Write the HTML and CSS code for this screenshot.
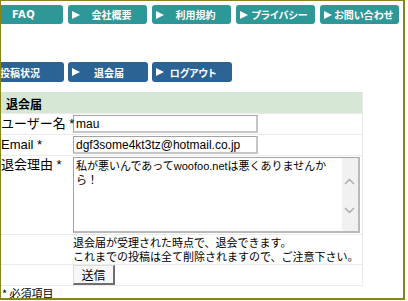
FILE: index.html
```html
<!DOCTYPE html>
<html lang="ja">
<head>
  <meta charset="UTF-8">
  <title>退会届</title>
  <link rel="stylesheet" href="styles.css">
</head>
<body>
  <div class="frame">
    <div class="nav nav-main">
      <a class="tab tab-plain">FAQ</a>
      <a class="tab"><svg class="arrow" width="8" height="8" viewBox="0 0 8 8"><polygon points="0,0 8,4 0,8" fill="#fff"/></svg><span class="label">会社概要</span></a>
      <a class="tab"><svg class="arrow" width="8" height="8" viewBox="0 0 8 8"><polygon points="0,0 8,4 0,8" fill="#fff"/></svg><span class="label">利用規約</span></a>
      <a class="tab"><svg class="arrow" width="8" height="8" viewBox="0 0 8 8"><polygon points="0,0 8,4 0,8" fill="#fff"/></svg><span class="label">プライバシー</span></a>
      <a class="tab"><svg class="arrow" width="8" height="8" viewBox="0 0 8 8"><polygon points="0,0 8,4 0,8" fill="#fff"/></svg><span class="label">お問い合わせ</span></a>
    </div>

    <div class="nav nav-member">
      <a class="tab"><svg class="arrow" width="8" height="8" viewBox="0 0 8 8"><polygon points="0,0 8,4 0,8" fill="#fff"/></svg><span class="label label-first">投稿状況</span></a>
      <a class="tab"><svg class="arrow" width="8" height="8" viewBox="0 0 8 8"><polygon points="0,0 8,4 0,8" fill="#fff"/></svg><span class="label">退会届</span></a>
      <a class="tab"><svg class="arrow" width="8" height="8" viewBox="0 0 8 8"><polygon points="0,0 8,4 0,8" fill="#fff"/></svg><span class="label">ログアウト</span></a>
    </div>

    <form class="quit-form" autocomplete="off">
      <table class="form-table">
        <colgroup><col class="col-name"><col class="col-value"></colgroup>
        <tr><th colspan="2">退会届</th></tr>
        <tr>
          <td class="name">ユーザー名 *</td>
          <td><input type="text" class="field" value="mau"></td>
        </tr>
        <tr>
          <td class="name">Email *</td>
          <td><input type="text" class="field" value="dgf3some4kt3tz@hotmail.co.jp"></td>
        </tr>
        <tr class="row-reason">
          <td class="name name-top">退会理由 *</td>
          <td>
            <div class="reason-box">
              <textarea class="reason">私が悪いんであってwoofoo.netは悪くありませんから！</textarea>
              <div class="scroll">
                <svg width="16" height="74" viewBox="0 0 16 74"><polyline points="3,26 7.5,21.5 12,26" fill="none" stroke="#a9a9a9" stroke-width="1.4"/><polyline points="3,50 7.5,54.5 12,50" fill="none" stroke="#a9a9a9" stroke-width="1.4"/></svg>
              </div>
            </div>
          </td>
        </tr>
        <tr class="row-note">
          <td></td>
          <td>退会届が受理された時点で、退会できます。<br>これまでの投稿は全て削除されますので、ご注意下さい。</td>
        </tr>
        <tr class="row-send">
          <td></td>
          <td><button type="submit" class="send">送信</button></td>
        </tr>
      </table>
    </form>
    <div class="required">* 必須項目</div>
  </div>
</body>
</html>
```

FILE: styles.css
```css
body {
  margin: 0;
  background: #fff;
  color: #000;
  font-family: "Liberation Sans", "Noto Sans CJK JP", sans-serif;
}
.frame {
  width: 402px;
  height: 297px;
  border: 1px solid #85851a;
  border-right-width: 2px;
  border-bottom-width: 2px;
  overflow: hidden;
}

/* tab buttons */
.nav {
  display: flex;
  gap: 5px;
  margin-left: -17px;
}
.nav-main { margin-top: 4px; }
.nav-member { margin-top: 38px; }
.tab {
  flex: none;
  width: 79px;
  height: 19px;
  display: flex;
  align-items: center;
  padding-left: 4px;
  box-sizing: border-box;
  border-radius: 3px;
  background: #2e9797;
  color: #fff;
  font-family: "Noto Sans CJK JP", sans-serif;
  font-weight: 700;
  font-size: 10px;
  font-feature-settings: "palt";
  text-decoration: none;
}
.nav-member .tab {
  height: 20px;
  background: #2b6394;
  width: 80px;
}
.nav-member .tab + .tab { margin-left: -1px; }
.tab-plain {
  justify-content: center;
  padding-left: 0;
  font-family: "DejaVu Sans", sans-serif;
  font-size: 10px;
  letter-spacing: 0.4px;
}
.arrow { flex: none; }
.label {
  flex: 1;
  text-align: center;
  padding-right: 4px;
}
.nav-member .label { padding-right: 10px; }
.nav-member .label-first { padding-right: 20px; }

/* form */
.quit-form { margin: 10px 0 0 0; }
.form-table {
  table-layout: fixed;
  width: 362px;
  border-collapse: separate;
  border-spacing: 0;
  border-right: 1px solid #ebebeb;
}
.col-name { width: 72px; }
.form-table th {
  height: 18px;
  padding: 3px 0 0 5px;
  line-height: 18px;
  background: #d6e8d5;
  text-align: left;
  font-size: 12px;
  font-family: "Noto Sans CJK JP", sans-serif;
  font-weight: 700;
  border-bottom: 1px solid #ebebeb;
}
.form-table td {
  padding: 1px 0;
  line-height: 18px;
  border-bottom: 1px solid #ebebeb;
  vertical-align: middle;
  white-space: nowrap;
}
.name {
  font-size: 13px;
  padding-left: 1px;
}
.form-table td.name-top {
  vertical-align: top;
  padding-top: 0;
}
.field {
  display: block;
  width: 185px;
  height: 18px;
  box-sizing: border-box;
  margin: 0;
  padding: 0 2px;
  border: 1px solid #a3a3a3;
  border-right: 2px solid #c6c6c6;
  border-bottom: 2px solid #c6c6c6;
  font-family: "Liberation Sans", "Noto Sans CJK JP", sans-serif;
  font-size: 12px;
  color: #000;
  outline: none;
}
.reason-box {
  display: flex;
  width: 287px;
  height: 76px;
  box-sizing: border-box;
  border: 1px solid #a3a3a3;
  border-right: 2px solid #b9b9b9;
  border-bottom: 2px solid #b9b9b9;
}
.reason {
  flex: 1;
  min-width: 0;
  margin: 0;
  padding: 1px 2px;
  border: none;
  resize: none;
  overflow: hidden;
  font-family: "Liberation Sans", "Noto Sans CJK JP", sans-serif;
  font-size: 11px;
  line-height: 14px;
  color: #000;
  outline: none;
}
.scroll {
  flex: none;
  width: 16px;
  background: #f1f1f1;
}
.scroll svg { display: block; }
.form-table .row-note td {
  padding: 0 0 1px 0;
  font-size: 11px;
  line-height: 14px;
  font-family: "Noto Sans CJK JP", sans-serif;
}
.form-table .row-send td { padding: 0; }
.send {
  display: block;
  width: 42px;
  height: 20px;
  margin: 0;
  padding: 0;
  background: #f7f7f7;
  border: 1px solid #dcdcdc;
  border-right: 2px solid #6f6f6f;
  border-bottom: 2px solid #6f6f6f;
  font-family: "Noto Sans CJK JP", sans-serif;
  font-size: 12px;
  line-height: 16px;
  color: #000;
}
.required {
  padding: 1px 0 0 1px;
  font-family: "Noto Sans CJK JP", sans-serif;
  font-size: 11px;
  line-height: 13px;
}
```
